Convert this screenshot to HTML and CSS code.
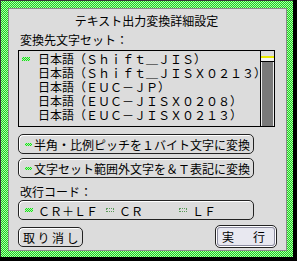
FILE: index.html
```html
<!DOCTYPE html>
<html lang="ja">
<head>
    <meta charset="UTF-8">
    <meta name="viewport" content="width=device-width, initial-scale=1.0">
    <title>テキスト出力変換詳細設定</title>
    <link rel="stylesheet" href="styles.css">
</head>
<body>
    <div class="frame">
        <div class="panel">
            <div class="title">テキスト出力変換詳細設定</div>
            <div class="label">変換先文字セット：</div>
            <div class="listbox">
                <ul class="items">
                    <li><span class="mark on"></span>日本語（Ｓｈｉｆｔ＿ＪＩＳ）</li>
                    <li><span class="mark"></span>日本語（Ｓｈｉｆｔ＿ＪＩＳＸ０２１３）</li>
                    <li><span class="mark"></span>日本語（ＥＵＣ－ＪＰ）</li>
                    <li><span class="mark"></span>日本語（ＥＵＣ－ＪＩＳＸ０２０８）</li>
                    <li><span class="mark"></span>日本語（ＥＵＣ－ＪＩＳＸ０２１３）</li>
                </ul>
                <div class="scroll"><div class="thumb"></div></div>
            </div>
            <div class="toggle"><span class="mark on"></span>半角・比例ピッチを１バイト文字に変換</div>
            <div class="toggle second"><span class="mark on"></span>文字セット範囲外文字を＆Ｔ表記に変換</div>
            <div class="label lower">改行コード：</div>
            <div class="radios">
                <span class="opt"><span class="mark on"></span>ＣＲ＋ＬＦ</span>
                <span class="opt"><span class="mark off"></span>ＣＲ</span>
                <span class="opt"><span class="mark off"></span>ＬＦ</span>
            </div>
            <div class="actions">
                <div class="btn cancel">取り消し</div>
                <div class="btn run">実　行</div>
            </div>
        </div>
    </div>
</body>
</html>
```

FILE: styles.css
```css
body {
    margin: 0;
    background: #000;
    font-family: "Noto Sans CJK JP", sans-serif;
    font-size: 12px;
    color: #000;
}
.frame {
    width: 293px;
    height: 257px;
    box-sizing: border-box;
    border-top: 1px solid #333;
    border-left: 1px solid #333;
    padding: 7px 6px 6px 7px;
    background: repeating-conic-gradient(#1fcf1f 0 25%, #a8ffa8 0 50%) 0 0 / 2px 2px;
}
.panel {
    height: 100%;
    box-sizing: border-box;
    background: #dcdcdc;
    border: 1px solid #8a8a8a;
    padding: 0 11px 0 9px;
    display: flex;
    flex-direction: column;
}
.title {
    margin-top: 5px;
    height: 14px;
    line-height: 14px;
    text-align: center;
}
.label {
    margin-top: 5px;
    height: 14px;
    line-height: 14px;
    padding-left: 2px;
}
.label.lower {
    margin-top: 7px;
}
.listbox {
    margin-top: 3px;
    height: 77px;
    box-sizing: border-box;
    border: 1px solid #000;
    display: flex;
}
.items {
    flex: 1;
    min-width: 0;
    margin: 0;
    padding: 1px 0 0 3px;
    list-style: none;
    overflow: hidden;
}
.items li {
    height: 14px;
    line-height: 14px;
    font-size: 12px;
    white-space: nowrap;
    display: flex;
    align-items: center;
}
.items .mark {
    margin-right: 8px;
}
.scroll {
    width: 13px;
    flex-shrink: 0;
    border-left: 1px solid #000;
    background: #7a7a7a;
    box-shadow: inset 1px 0 #eee, inset -1px 0 #eee;
}
.thumb {
    height: 10px;
    border-bottom: 1px solid #000;
    background: linear-gradient(#dcdcdc 0 5px, #e8e800 5px 7px, #f4f4f4 7px);
}
.mark {
    display: inline-block;
    width: 8px;
    height: 4px;
    box-sizing: border-box;
    flex-shrink: 0;
}
.mark.on {
    background: repeating-conic-gradient(#1fcf1f 0 25%, #a8ffa8 0 50%) 0 0 / 2px 2px;
}
.mark.off {
    border: 1px dotted #5a9a5a;
}
.toggle {
    margin-top: 7px;
    width: 236px;
    height: 20px;
    box-sizing: border-box;
    border: 1px solid #222;
    border-radius: 5px;
    box-shadow: inset 1px 1px #fff;
    padding-left: 6px;
    display: flex;
    align-items: center;
    white-space: nowrap;
}
.toggle .mark {
    width: 7px;
    height: 3px;
    margin-right: 2px;
}
.toggle.second {
    margin-top: 4px;
}
.radios {
    margin-top: 1px;
    width: 236px;
    height: 20px;
    box-sizing: border-box;
    border: 1px solid #222;
    border-radius: 5px;
    box-shadow: inset 1px 1px #fff;
    padding-left: 6px;
    display: grid;
    grid-template-columns: 81px 73px auto;
    align-items: center;
}
.opt {
    display: flex;
    align-items: center;
}
.opt .mark {
    margin-right: 5px;
}
.actions {
    margin-top: 5px;
    display: flex;
    justify-content: space-between;
    align-items: flex-start;
}
.btn {
    box-sizing: border-box;
    border: 1px solid #222;
    border-radius: 5px;
    display: flex;
    align-items: center;
    white-space: nowrap;
}
.cancel {
    margin-top: 2px;
    width: 65px;
    height: 20px;
    padding-left: 4px;
    letter-spacing: 2.5px;
    box-shadow: inset 1px 1px #fff;
}
.run {
    width: 62px;
    height: 23px;
    margin-right: -2px;
    padding-left: 6px;
    letter-spacing: 3.5px;
    background: #e8e8f0;
    box-shadow: inset 0 0 0 1px #fff, inset 0 0 0 2px #8c8ca0;
}
```
